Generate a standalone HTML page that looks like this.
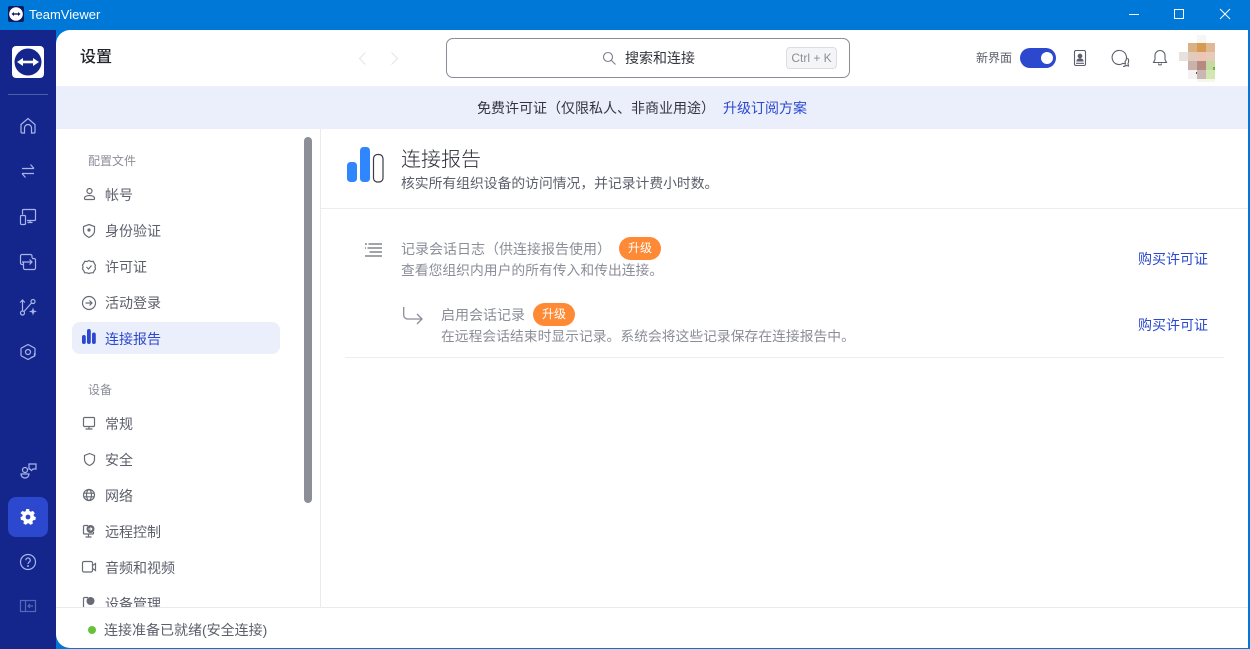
<!DOCTYPE html>
<html lang="zh"><head><meta charset="utf-8"><title>TeamViewer</title>
<style>
*{margin:0;padding:0;box-sizing:border-box}
html,body{width:1250px;height:649px;overflow:hidden;background:#0078d7;font-family:"Liberation Sans","Noto Sans CJK SC",sans-serif}
.a{position:absolute;white-space:nowrap}
svg{position:absolute;overflow:visible;fill:none}
.n{left:105px;font-size:14px;line-height:20px;color:#5c5f6b}
.h{left:88px;font-size:12px;line-height:18px;color:#8b8e98}
.s svg{stroke:#a9b5ea;stroke-width:1.2}
.i{stroke:#686b76;stroke-width:1.2}
</style></head><body>
<div class="a" style="left:0;top:0;width:1250px;height:30px;background:#0078d7"></div>
<svg style="left:8px;top:6px" width="16" height="16"><rect width="16" height="16" rx="2" fill="#0d1b5e"/><circle cx="8" cy="8" r="6.800" fill="#fff"/><path d="M4.500 8h7" stroke="#0d1b5e" stroke-width="1.400"/><path d="M6 6L3.500 8 6 10zM10 6l2.500 2L10 10z" fill="#0d1b5e"/></svg>
<div class="a" style="left:29px;top:6px;font-size:13px;line-height:18px;color:#fff">TeamViewer</div>
<svg style="left:1129px;top:10px" width="110" height="20" stroke="#fff" stroke-width="1"><path d="M0 4.500h10"/><rect x="45.500" y="-0.500" width="9" height="9"/><path d="M91 -1l10 10M101 -1L91 9"/></svg>

<div class="a s" style="left:0;top:30px;width:56px;height:619px;background:#14268c">
<svg style="left:12px;top:16px;stroke:none" width="32" height="32"><rect width="32" height="32" rx="4" fill="#fff"/><circle cx="16" cy="16" r="13.500" fill="#14268c"/><path d="M9 16h14" stroke="#fff" stroke-width="2.600"/><path d="M11 12L5 16l6 4zM21 12l6 4-6 4z" fill="#fff"/></svg>
<div class="a" style="left:8px;top:64px;width:40px;height:1px;background:#4e5ea8"></div>
<svg style="left:20px;top:88px" width="16" height="16"><path d="M1 6.500L8 .5 15 6.500V14a1 1 0 0 1-1 1h-2.500V10a3.500 3.500 0 0 0-7 0v5H2a1 1 0 0 1-1-1z"/></svg>
<svg style="left:21px;top:134px" width="14" height="14"><path d="M1 4.500h12M9.500 .5L13 4.500M13 9.500H1M4.500 13.500L1 9.500"/></svg>
<svg style="left:20px;top:179px" width="16" height="16"><path d="M2.500 5.500V1.500a1 1 0 0 1 1-1h11a1 1 0 0 1 1 1v9a1 1 0 0 1-1 1H7M10 11.500v1.500M7.500 13.500h5"/><rect x=".5" y="6.500" width="5" height="9" rx="1"/></svg>
<svg style="left:20px;top:224px" width="16" height="16"><path d="M12 4V2a1.500 1.500 0 0 0-1.500-1.500H2A1.500 1.500 0 0 0 .5 2v7A1.500 1.500 0 0 0 2 10.500h1.500M3.500 8v6a1.500 1.500 0 0 0 1.500 1.500h9a1.500 1.500 0 0 0 1.500-1.500V6a1.500 1.500 0 0 0-1.500-1.500h-2"/><path d="M2 8h10M9.500 5.500L12 8l-2.500 2.500"/></svg>
<svg style="left:20px;top:269px" width="17" height="17"><path d="M2.500 11.500V1M.2 3.500L2.500 1l2.300 2.500"/><circle cx="2.500" cy="14" r="2"/><circle cx="13" cy="2.500" r="2"/><path d="M4 12.500L11.500 4"/><path d="M13 8.500l1 3 3 1-3 1-1 3-1-3-3-1 3-1z" fill="#a9b5ea" stroke="none"/></svg>
<svg style="left:20px;top:314px" width="16" height="17"><path d="M8 .5l6.500 3.500a1 1 0 0 1 .5 1v6a1 1 0 0 1-.5 1L8 15.500 1.500 12a1 1 0 0 1-.5-1V5a1 1 0 0 1 .5-1z" stroke-linejoin="round"/><circle cx="8" cy="8" r="2.500"/><path d="M11 13.500l3.500-1.500v-3"/></svg>
<svg style="left:20px;top:433px" width="17" height="17"><circle cx="5" cy="7" r="2.500"/><path d="M1 11h8a4 4 0 0 1-8 0zM9 4V1h7v5h-3l-1.500 1.500L10 6H9z"/></svg>
<div class="a" style="left:8px;top:467px;width:40px;height:40px;border-radius:8px;background:#2b48cf"></div>
<svg style="left:20px;top:479px;stroke:none" width="16" height="16"><path d="M6.500 0h3l.4 2.200 1.500.7 2-1 2 2.400-1.300 1.900.4 1.300 2 .9-.5 3-2.200.3-.9 1.300.6 2.100-2.700 1.500-1.500-1.600h-1.600l-1.500 1.600-2.700-1.500.6-2.100-.9-1.300-2.200-.3-.5-3 2-.9.4-1.300L.5 4.300l2-2.400 2 1 1.500-.7z" fill="#fff" transform="scale(.96)"/><circle cx="8" cy="8" r="2.400" fill="#2b48cf"/></svg>
<svg style="left:20px;top:524px" width="16" height="16"><circle cx="8" cy="8" r="7.500"/><path d="M5.800 6.200a2.200 2.200 0 1 1 3.300 1.900C8.300 8.600 8 9 8 10"/><circle cx="8" cy="12" r=".4"/></svg>
<svg style="left:20px;top:570px;opacity:.45" width="16" height="12"><rect x=".5" y=".5" width="15" height="11"/><path d="M5.500 .5v11M13 6H8M10 4L8 6l2 2"/></svg>
</div>

<div class="a" style="left:56px;top:30px;width:1192px;height:618px;background:#fff;border-radius:14px 0 0 14px;overflow:hidden">
<div class="a" style="left:0;top:56px;width:1192px;height:43px;background:#ebeefb"></div>
<div class="a" style="left:0;top:577px;width:1192px;height:1px;background:#e9eaee"></div>
<div class="a" style="left:264px;top:99px;width:1px;height:478px;background:#e9eaee"></div>
</div>

<div class="a" style="left:80px;top:46px;font-size:16px;line-height:24px;color:#22242c;font-weight:500">设置</div>
<svg style="left:359px;top:52px" width="40" height="13" stroke="#e2e3e8" stroke-width="1"><path d="M6.500 .5L.5 6.500l6 6M32.500 .5l6 6-6 6"/></svg>
<div class="a" style="left:446px;top:38px;width:404px;height:40px;border:1px solid #8a8c96;border-radius:7px;background:#fff"></div>
<svg style="left:603px;top:52px" width="13" height="13" stroke="#7c7f89" stroke-width="1.100"><circle cx="5" cy="5" r="4.500"/><path d="M8.500 8.500L12.500 12.500"/></svg>
<div class="a" style="left:625px;top:48px;font-size:14px;line-height:20px;color:#33353e">搜索和连接</div>
<div class="a" style="left:786px;top:47px;width:51px;height:22px;border:1px solid #dcdde3;border-radius:4px;background:#f5f5f8;font-size:12px;line-height:20px;color:#8b8e98;text-align:center">Ctrl + K</div>

<div class="a" style="left:976px;top:49px;font-size:12px;line-height:18px;color:#5c5f6b">新界面</div>
<div class="a" style="left:1020px;top:48px;width:36px;height:20px;border-radius:10px;background:#2b48cf"></div>
<div class="a" style="left:1041px;top:52px;width:12px;height:12px;border-radius:50%;background:#fff"></div>
<svg style="left:1074px;top:50px" width="13" height="17" stroke="#5c5f6b" stroke-width="1.100"><rect x=".5" y=".5" width="11" height="15" rx="1.500"/><circle cx="6" cy="6" r="1.800" fill="#5c5f6b"/><path d="M3 11a3 2.200 0 0 1 6 0z" fill="#5c5f6b"/><path d="M2 13.300h8"/></svg>
<svg style="left:1112px;top:50px" width="17" height="17" stroke="#5c5f6b" stroke-width="1.100"><path d="M7.500.5a7 7 0 0 1 5.500 11.300l.5 2.200-2.500-.7A7 7 0 1 1 7.500.5z"/><path d="M15.500 8a5 5 0 0 1 .5 5.500l.5 2.500-2.500-.5c-1 .7-2 1-3 1"/></svg>
<svg style="left:1153px;top:50px" width="14" height="16" stroke="#5c5f6b" stroke-width="1.100"><path d="M7 .5a5 5 0 0 1 5 5v4l1.500 3H.5l1.500-3v-4a5 5 0 0 1 5-5zM5.500 13.500a1.500 1.500 0 0 0 3 0"/></svg>
<div class="a" style="left:1197px;top:35px;width:9px;height:8px;background:#f7f6f3"></div>
<div class="a" style="left:1188px;top:43px;width:9px;height:9px;background:#d9b184"></div>
<div class="a" style="left:1197px;top:43px;width:9px;height:9px;background:#d69a52"></div>
<div class="a" style="left:1206px;top:43px;width:9px;height:9px;background:#dfb993"></div>
<div class="a" style="left:1179px;top:52px;width:9px;height:9px;background:#e8e2df"></div>
<div class="a" style="left:1188px;top:52px;width:9px;height:9px;background:#e2cbbb"></div>
<div class="a" style="left:1197px;top:52px;width:9px;height:9px;background:#edc5b7"></div>
<div class="a" style="left:1206px;top:52px;width:9px;height:9px;background:#e6cbb9"></div>
<div class="a" style="left:1188px;top:61px;width:9px;height:9px;background:#c9b1ac"></div>
<div class="a" style="left:1197px;top:61px;width:9px;height:9px;background:#b78a80"></div>
<div class="a" style="left:1206px;top:61px;width:9px;height:9px;background:#c5d9a0"></div>
<div class="a" style="left:1213px;top:67px;width:2px;height:4px;background:#6db33f"></div>
<div class="a" style="left:1188px;top:70px;width:9px;height:9px;background:#f6f1f2"></div>
<div class="a" style="left:1196px;top:72px;width:3px;height:2px;background:#6b4a55"></div>
<div class="a" style="left:1197px;top:70px;width:9px;height:9px;background:#cbb6b6"></div>
<div class="a" style="left:1206px;top:70px;width:9px;height:9px;background:#d3e8b0"></div>
<div class="a" style="left:1197px;top:79px;width:18px;height:3px;background:#f5f7ee"></div>

<div class="a" style="left:477px;top:98px;font-size:14px;line-height:20px;color:#33353e">免费许可证（仅限私人、非商业用途）</div>
<div class="a" style="left:723px;top:98px;font-size:14px;line-height:20px;color:#2b48cf">升级订阅方案</div>

<div class="a" style="left:304px;top:137px;width:8px;height:366px;border-radius:4px;background:#8d8f98"></div>

<div class="a h" style="top:152px">配置文件</div>
<div class="a n" style="top:185px">帐号</div>
<div class="a n" style="top:221px">身份验证</div>
<div class="a n" style="top:257px">许可证</div>
<div class="a n" style="top:293px">活动登录</div>
<div class="a" style="left:72px;top:322px;width:208px;height:32px;border-radius:8px;background:#ebeefb"></div>
<div class="a n" style="top:329px;color:#2b48cf">连接报告</div>
<div class="a h" style="top:381px">设备</div>
<div class="a n" style="top:414px">常规</div>
<div class="a n" style="top:450px">安全</div>
<div class="a n" style="top:486px">网络</div>
<div class="a n" style="top:522px">远程控制</div>
<div class="a n" style="top:558px">音频和视频</div>
<div class="a" style="left:56px;top:594px;width:260px;height:13px;overflow:hidden"><div class="a n" style="left:49px;top:0">设备管理</div></div>

<svg class="i" style="left:84px;top:188px" width="11" height="14"><circle cx="5.500" cy="3" r="2.500"/><path d="M.5 10a5 2.500 0 0 1 10 0v.5a1 1 0 0 1-1 1h-8a1 1 0 0 1-1-1z"/></svg>
<svg class="i" style="left:83px;top:224px" width="12" height="14"><path d="M6 .5l5.500 2v4.500c0 3-2.500 5-5.500 6.500C3 12 .5 10 .5 7V2.500z"/><circle cx="6" cy="6" r="1" fill="#686b76"/></svg>
<svg class="i" style="left:82px;top:260px" width="14" height="14"><path d="M7 .5l2 1 2.300-.1 1 2 1.200 2L13 7l.5 2-1.300 1.800-.9 2-2.300 0L7 13.500 5 12.800H2.700l-.9-2L.5 9 1 7 .5 5l1.300-1.800 1-1.900L5 1.500z"/><path d="M4.500 7l2 2 3-3.500"/></svg>
<svg class="i" style="left:82px;top:296px" width="14" height="14"><circle cx="7" cy="7" r="6.500"/><path d="M3.500 7h6.500M7.500 4.500L10 7l-2.500 2.500"/></svg>
<svg style="left:82px;top:329px" width="14" height="15"><rect y="6" width="3.800" height="9" rx="1.900" fill="#2b48cf"/><rect x="5" y="0" width="3.800" height="15" rx="1.900" fill="#2b48cf"/><rect x="10" y="3.500" width="3.800" height="11.500" rx="1.900" fill="#2b48cf"/></svg>
<svg class="i" style="left:83px;top:417px" width="12" height="14"><rect x=".5" y=".5" width="11" height="9" rx="1"/><path d="M6 10v1.500M2.500 12h7"/></svg>
<svg class="i" style="left:84px;top:453px" width="11" height="13"><path d="M5.500 .5l5 2v4c0 3-2.200 4.800-5 6-2.800-1.200-5-3-5-6v-4z"/></svg>
<svg class="i" style="left:83px;top:489px" width="12" height="12"><circle cx="6" cy="6" r="5.500"/><ellipse cx="6" cy="6" rx="2.500" ry="5.500"/><path d="M.5 4.200h11M.5 7.800h11"/></svg>
<svg class="i" style="left:83px;top:525px" width="13" height="14"><path d="M5 .5H1.500a1 1 0 0 0-1 1V8a1 1 0 0 0 1 1h8a1 1 0 0 0 1-1v-1M5.500 9v2.500M2.500 12h6"/><circle cx="7.500" cy="4" r="4" fill="#686b76" stroke="none"/><path d="M5.500 4h3.500M7.500 2.500L9 4 7.500 5.500" stroke="#fff" stroke-width=".9"/></svg>
<svg class="i" style="left:82px;top:561px" width="14" height="12"><rect x=".5" y=".5" width="10" height="10.500" rx="1.500"/><path d="M10.500 4.500l3-2v7l-3-2"/></svg>
<svg class="i" style="left:83px;top:597px" width="13" height="10"><path d="M5 .5H1.500a1 1 0 0 0-1 1V10"/><circle cx="7.500" cy="4" r="4" fill="#686b76" stroke="none"/></svg>

<svg style="left:347px;top:147px" width="37" height="36"><rect x="0" y="15" width="10" height="20" rx="3.500" fill="#2f86ff"/><rect x="13" y="0" width="10" height="35" rx="3.500" fill="#2f86ff"/><rect x="26.500" y="7.500" width="9.500" height="27.500" rx="4" stroke="#3a3c45" stroke-width="1.200"/></svg>
<div class="a" style="left:401px;top:146px;font-size:20px;line-height:28px;color:#2a2c35;font-weight:300">连接报告</div>
<div class="a" style="left:401px;top:174px;font-size:13.8px;line-height:19px;color:#5c5f6b">核实所有组织设备的访问情况，并记录计费小时数。</div>
<div class="a" style="left:321px;top:208px;width:927px;height:1px;background:#ecedf1"></div>

<svg style="left:364px;top:243px" width="19" height="15" stroke="#82858f" stroke-width="1.400"><path d="M1 1h2M4.500 1h13.500M3.500 5h14.500M1 5h1M5.500 9h12.500M1 13h17"/></svg>
<div class="a" style="left:401px;top:239px;font-size:14px;line-height:20px;color:#8b8e98">记录会话日志（供连接报告使用）</div>
<div class="a" style="left:619px;top:237px;width:42px;height:23px;border-radius:12px;background:#ff8a35;color:#fff;font-size:12px;line-height:23px;text-align:center">升级</div>
<div class="a" style="left:401px;top:261px;font-size:13.8px;line-height:19px;color:#8b8e98">查看您组织内用户的所有传入和传出连接。</div>
<div class="a" style="left:1138px;top:249px;font-size:14px;line-height:20px;color:#2b48cf">购买许可证</div>

<svg style="left:403px;top:307px" width="20" height="17" stroke="#8b8e98" stroke-width="1.300"><path d="M.7 0v8a4 4 0 0 0 4 4H19M14 7l5 5-5 5"/></svg>
<div class="a" style="left:441px;top:305px;font-size:14px;line-height:20px;color:#8b8e98">启用会话记录</div>
<div class="a" style="left:533px;top:303px;width:42px;height:23px;border-radius:12px;background:#ff8a35;color:#fff;font-size:12px;line-height:23px;text-align:center">升级</div>
<div class="a" style="left:441px;top:327px;font-size:13.8px;line-height:19px;color:#8b8e98">在远程会话结束时显示记录。系统会将这些记录保存在连接报告中。</div>
<div class="a" style="left:1138px;top:315px;font-size:14px;line-height:20px;color:#2b48cf">购买许可证</div>
<div class="a" style="left:345px;top:357px;width:879px;height:1px;background:#ecedf1"></div>

<div class="a" style="left:88px;top:626px;width:8px;height:8px;border-radius:50%;background:#67c23a"></div>
<div class="a" style="left:104px;top:620px;font-size:14px;line-height:20px;color:#5c5f6b">连接准备已就绪(安全连接)</div>
</body></html>
